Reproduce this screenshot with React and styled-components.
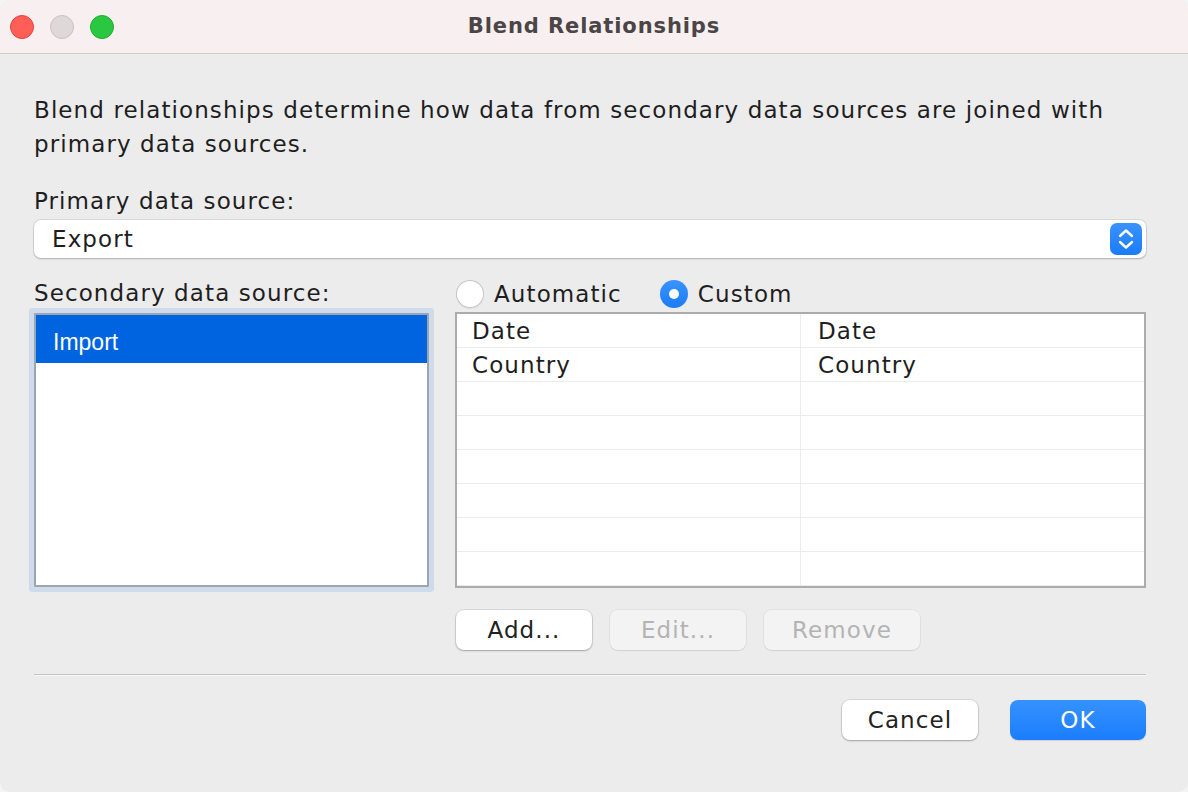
import React from "react";
import styled, { createGlobalStyle } from "styled-components";

const GlobalStyle = createGlobalStyle`
  html, body {
    margin: 0;
    padding: 0;
    background: #f4f4f4;
  }
  * { box-sizing: border-box; }
`;

const Window = styled.div`
  width: 1188px;
  height: 792px;
  background: #ececec;
  border-radius: 10px;
  overflow: hidden;
  display: flex;
  flex-direction: column;
  font-family: "DejaVu Sans", "Liberation Sans", sans-serif;
  letter-spacing: 1.1px;
  color: #1e1e1e;
`;

const TitleBar = styled.div`
  height: 54px;
  flex-shrink: 0;
  background: #f8eff0;
  border-bottom: 1px solid #cfcacb;
  display: flex;
  align-items: center;
  padding-left: 10px;
  position: relative;
`;

const Lights = styled.div`
  display: flex;
  gap: 16px;
`;

const Light = styled.span`
  width: 24px;
  height: 24px;
  border-radius: 50%;
  background: ${(p) => p.color};
  border: 1px solid ${(p) => p.edge};
`;

const Title = styled.div`
  position: absolute;
  left: 0;
  right: 0;
  top: 14px;
  text-align: center;
  font-size: 21px;
  letter-spacing: 0.9px;
  font-weight: bold;
  color: #4b4546;
  pointer-events: none;
`;

const Body = styled.div`
  flex: 1;
  padding: 39px 42px 0 34px;
  display: flex;
  flex-direction: column;
`;

const Text = styled.p`
  margin: 0;
  font-size: 23px;
  line-height: 34px;
`;

const Label = styled(Text)`
  margin-top: ${(p) => p.top || 0}px;
`;

const Select = styled.div`
  margin-top: 2px;
  height: 38px;
  background: #fff;
  border-radius: 7px;
  box-shadow: 0 0 0 1px rgba(0, 0, 0, 0.08), 0 1px 2px rgba(0, 0, 0, 0.2);
  display: flex;
  align-items: center;
  justify-content: space-between;
  padding: 0 4px 0 18px;
  font-size: 23px;
`;

const Stepper = styled.span`
  width: 32px;
  height: 32px;
  border-radius: 7px;
  background: linear-gradient(#3a93ff, #1a7cf8);
  display: flex;
  align-items: center;
  justify-content: center;
`;

const Middle = styled.div`
  margin-top: 18px;
  display: grid;
  grid-template-columns: 395px 1fr;
  column-gap: 26px;
`;

const LeftCol = styled.div`
  display: flex;
  flex-direction: column;
`;

const ListBox = styled.div`
  margin-top: 3px;
  height: 274px;
  background: #fff;
  border: 2px solid #9ba6b3;
  box-shadow: 0 0 0 5px #cfdbea;
  border-radius: 1px;
`;

const ListItem = styled.div`
  height: 48px;
  background: ${(p) => (p.selected ? "#0064e1" : "transparent")};
  color: ${(p) => (p.selected ? "#fff" : "#1e1e1e")};
  font-family: "Liberation Sans", Arial, sans-serif;
  letter-spacing: 0;
  font-size: 23px;
  display: flex;
  align-items: center;
  padding: 6px 0 0 17px;
`;

const RightCol = styled.div`
  display: flex;
  flex-direction: column;
`;

const RadioRow = styled.div`
  height: 36px;
  display: flex;
  align-items: center;
  gap: 38px;
  padding-left: 1px;
`;

const RadioLabel = styled.label`
  display: flex;
  align-items: center;
  gap: 10px;
  font-size: 23px;
`;

const Radio = styled.span`
  width: 28px;
  height: 28px;
  border-radius: 50%;
  display: flex;
  align-items: center;
  justify-content: center;
  background: ${(p) => (p.checked ? "linear-gradient(#3a93ff, #1a7cf8)" : "#fff")};
  box-shadow: ${(p) =>
    p.checked ? "none" : "inset 0 0 0 1px #c4c4c4, 0 1px 1px rgba(0,0,0,0.08)"};
  &::after {
    content: "";
    display: ${(p) => (p.checked ? "block" : "none")};
    width: 10px;
    height: 10px;
    border-radius: 50%;
    background: #fff;
  }
`;

const Table = styled.div`
  height: 276px;
  background: #fff;
  border: 2px solid #acacac;
  overflow: hidden;
`;

const Row = styled.div`
  display: grid;
  grid-template-columns: 344px 1fr;
  height: 34px;
  border-bottom: 1px solid #ececec;
`;

const Cell = styled.div`
  font-size: 23px;
  display: flex;
  align-items: center;
  padding-left: ${(p) => (p.last ? 17 : 15)}px;
  border-right: ${(p) => (p.last ? "none" : "1px solid #ececec")};
`;

const ButtonRow = styled.div`
  margin-top: 22px;
  display: flex;
  gap: 18px;
  padding-left: 1px;
`;

const Button = styled.button`
  width: ${(p) => p.w || 136}px;
  height: 40px;
  border: none;
  border-radius: 8px;
  font-family: "DejaVu Sans", "Liberation Sans", sans-serif;
  letter-spacing: 1.1px;
  font-size: 23px;
  padding: 0;
  color: ${(p) => (p.primary ? "#fff" : p.disabled ? "#b3b3b3" : "#222")};
  background: ${(p) =>
    p.primary
      ? "linear-gradient(#3592ff, #1b7dfb)"
      : p.disabled
      ? "#f3f3f3"
      : "#fff"};
  box-shadow: ${(p) =>
    p.primary
      ? "0 1px 1px rgba(0,0,0,0.12)"
      : p.disabled
      ? "0 0 0 1px rgba(0,0,0,0.04), 0 1px 1px rgba(0,0,0,0.08)"
      : "0 0 0 1px rgba(0,0,0,0.08), 0 1px 2px rgba(0,0,0,0.25)"};
`;

const Separator = styled.div`
  margin-top: 24px;
  height: 2px;
  border-top: 1px solid #c4c4c4;
  border-bottom: 1px solid #f7f7f7;
`;

const Footer = styled.div`
  margin-top: 24px;
  display: flex;
  justify-content: flex-end;
  gap: 32px;
`;

const rows = [
  ["Date", "Date"],
  ["Country", "Country"],
  ["", ""],
  ["", ""],
  ["", ""],
  ["", ""],
  ["", ""],
  ["", ""],
];

export default function App() {
  return (
    <>
      <GlobalStyle />
      <Window>
        <TitleBar>
          <Lights>
            <Light color="#ff5f57" edge="#e0443e" />
            <Light color="#ded8d9" edge="#c9c1c2" />
            <Light color="#2ac840" edge="#1eac31" />
          </Lights>
          <Title>Blend Relationships</Title>
        </TitleBar>
        <Body>
          <Text>
            Blend relationships determine how data from secondary data sources are joined with
            primary data sources.
          </Text>
          <Label top={23}>Primary data source:</Label>
          <Select>
            <span>Export</span>
            <Stepper>
              <svg width="18" height="22" viewBox="0 0 18 22" fill="none" stroke="#fff" strokeWidth="2.4" strokeLinecap="round" strokeLinejoin="round">
                <path d="M3 8 L9 2.5 L15 8" />
                <path d="M3 14 L9 19.5 L15 14" />
              </svg>
            </Stepper>
          </Select>
          <Middle>
            <LeftCol>
              <Text>Secondary data source:</Text>
              <ListBox>
                <ListItem selected>Import</ListItem>
              </ListBox>
            </LeftCol>
            <RightCol>
              <RadioRow>
                <RadioLabel>
                  <Radio />
                  Automatic
                </RadioLabel>
                <RadioLabel>
                  <Radio checked />
                  Custom
                </RadioLabel>
              </RadioRow>
              <Table>
                {rows.map((r, i) => (
                  <Row key={i}>
                    <Cell>{r[0]}</Cell>
                    <Cell last>{r[1]}</Cell>
                  </Row>
                ))}
              </Table>
              <ButtonRow>
                <Button>Add...</Button>
                <Button disabled>Edit...</Button>
                <Button disabled w={156}>Remove</Button>
              </ButtonRow>
            </RightCol>
          </Middle>
          <Separator />
          <Footer>
            <Button>Cancel</Button>
            <Button primary>OK</Button>
          </Footer>
        </Body>
      </Window>
    </>
  );
}
